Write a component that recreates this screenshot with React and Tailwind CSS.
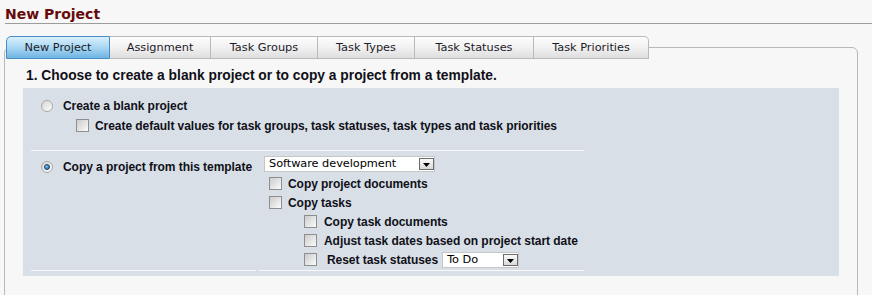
import React from "react";

const tabs = [
  { label: "New Project", w: "w-[104px]", active: true },
  { label: "Assignment", w: "w-[101px]" },
  { label: "Task Groups", w: "w-[107px]" },
  { label: "Task Types", w: "w-[97px]" },
  { label: "Task Statuses", w: "w-[119px]" },
  { label: "Task Priorities", w: "w-[115px]", last: true },
];

function Tab({ label, w, active, last }) {
  const base =
    "h-[23px] flex items-center justify-center border-t border-b border-r text-[11.33px] text-[#1c1c28] font-['DejaVu_Sans',Verdana,sans-serif]";
  if (active) {
    return (
      <div
        className={`${w} ${base} border-l border-[#4a8cc6] rounded-tl-[5px] bg-gradient-to-b from-[#d9f0fc] via-[#a9d7f3] to-[#6fb4e3]`}
      >
        {label}
      </div>
    );
  }
  return (
    <div
      className={`${w} ${base} border-[#b9b9b9] bg-gradient-to-b from-[#fdfdfd] via-[#f1f1f1] to-[#dedede] ${
        last ? "rounded-tr-[5px]" : ""
      }`}
    >
      {label}
    </div>
  );
}

function Checkbox({ className = "" }) {
  return (
    <span
      className={`${className} inline-block shrink-0 w-[13px] h-[13px] border border-[#8e8e8e] bg-gradient-to-br from-[#cccccc] to-[#fbfbfb]`}
    />
  );
}

function Radio({ className = "", checked }) {
  return (
    <span
      className={`${className} shrink-0 w-[12px] h-[12px] rounded-full border border-[#a9a9a9] bg-gradient-to-br from-[#d4d4d4] to-[#ffffff] flex items-center justify-center`}
    >
      {checked && (
        <span className="w-[6px] h-[6px] rounded-full bg-[radial-gradient(circle_at_35%_35%,#7cc0f0,#1f5f9e)] border border-[#1b3f66]" />
      )}
    </span>
  );
}

function Select({ value, w }) {
  return (
    <div
      className={`${w} h-[16px] bg-white border border-[#c6c6c6] flex items-center justify-between`}
    >
      <span className="pl-[4px] font-['DejaVu_Sans',Verdana,sans-serif] font-normal text-[11.33px] leading-none text-black">
        {value}
      </span>
      <span className="w-[15px] h-[12px] border border-[#6c6c6c] bg-gradient-to-b from-[#fbfbfb] to-[#d9d9d9] flex items-end justify-center pb-[2px]">
        <svg width="7" height="4" viewBox="0 0 7 4">
          <path d="M0 0h7L3.5 4z" fill="#000" />
        </svg>
      </span>
    </div>
  );
}

function Line({ children, className = "" }) {
  return (
    <div className={`flex items-center h-[19px] whitespace-nowrap ${className}`}>
      {children}
    </div>
  );
}

export default function App() {
  return (
    <div className="min-h-[295px] bg-[#f7f7f7] font-['Liberation_Sans',Arial,sans-serif] text-[#101018]">
      <div className="ml-[5px] pt-[6px] border-b border-[#9c9c9c] font-['DejaVu_Sans',Verdana,sans-serif] font-bold text-[14px] leading-[17px] text-[#660b0b]">
        New Project
      </div>

      <div className="relative z-10 mt-[12px] ml-[6px] -mb-[12px] flex">
        {tabs.map((t) => (
          <Tab key={t.label} {...t} />
        ))}
      </div>

      <div className="ml-[4px] w-[854px] border border-[#b8b8b8] rounded-t-[6px] pb-[40px]">
        <div className="pt-[20px] pl-[18px]">
          <div className="pl-[3px] text-[13.8px] leading-[16px] font-bold">
            1. Choose to create a blank project or to copy a project from a template.
          </div>

          <div className="mt-[4px] w-[816px] bg-[#d8dfe7] pt-[8px] px-[8px] pb-[5px] text-[12px] font-bold tracking-[-0.05px]">
            <div className="w-[553px]">
              <div className="border-b border-[#f6f8fa] pb-[15px]">
                <Line className="mb-[1px]">
                  <Radio className="ml-[10px]" />
                  <span className="ml-[10px]">Create a blank project</span>
                </Line>
                <Line>
                  <Checkbox className="ml-[45px]" />
                  <span className="ml-[6px]">
                    Create default values for task groups, task statuses, task types and task priorities
                  </span>
                </Line>
              </div>

              <div className="flex gap-[3px]">
                <div className="w-[225px] border-b border-[#f6f8fa] pt-[6px]">
                  <Line>
                    <Radio className="ml-[10px]" checked />
                    <span className="ml-[10px]">Copy a project from this template</span>
                  </Line>
                </div>
                <div className="w-[325px] border-b border-[#f6f8fa] pt-[5px] pl-[5px] pb-[1px]">
                  <div className="mb-[2px]">
                    <Select value="Software development" w="w-[171px]" />
                  </div>
                  <Line>
                    <Checkbox className="ml-[5px]" />
                    <span className="ml-[6px]">Copy project documents</span>
                  </Line>
                  <Line>
                    <Checkbox className="ml-[5px]" />
                    <span className="ml-[6px]">Copy tasks</span>
                  </Line>
                  <Line>
                    <Checkbox className="ml-[40px]" />
                    <span className="ml-[7px]">Copy task documents</span>
                  </Line>
                  <Line>
                    <Checkbox className="ml-[40px]" />
                    <span className="ml-[7px]">Adjust task dates based on project start date</span>
                  </Line>
                  <Line>
                    <Checkbox className="ml-[40px]" />
                    <span className="ml-[10px]">Reset task statuses</span>
                    <span className="ml-[4px]">
                      <Select value="To Do" w="w-[77px]" />
                    </span>
                  </Line>
                </div>
              </div>
            </div>
          </div>
        </div>
      </div>
    </div>
  );
}
